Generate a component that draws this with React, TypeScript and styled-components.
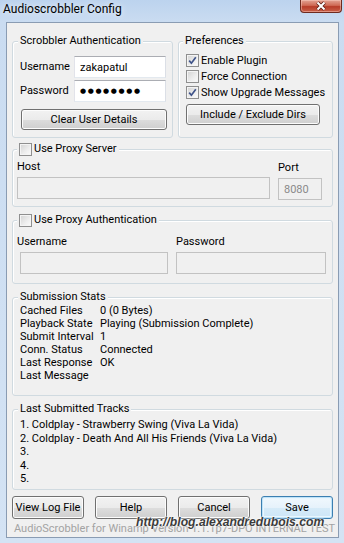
import styled, { createGlobalStyle } from "styled-components";

const GlobalStyle = createGlobalStyle`
   * {
      box-sizing: border-box;
   }
   body {
      margin: 0;
      font-family: Roboto, "Noto Sans", sans-serif;
      font-size: 11px;
      color: #000;
   }
`;

const stats = [
   { label: "Cached Files", value: "0 (0 Bytes)" },
   { label: "Playback State", value: "Playing (Submission Complete)" },
   { label: "Submit Interval", value: "1" },
   { label: "Conn. Status", value: "Connected" },
   { label: "Last Response", value: "OK" },
   { label: "Last Message", value: "" },
];

const tracks = [
   "1. Coldplay - Strawberry Swing (Viva La Vida)",
   "2. Coldplay - Death And All His Friends (Viva La Vida)",
   "3.",
   "4.",
   "5.",
];

function CheckBox({ checked }: { checked?: boolean }) {
   return (
      <CheckBoxStyled>
         {checked && (
            <svg width="11" height="11" viewBox="0 0 11 11">
               <path
                  d="M2.2 5.6 L4.4 8.2 L8.8 2.2"
                  fill="none"
                  stroke="#3f5389"
                  strokeWidth="1.7"
               />
            </svg>
         )}
      </CheckBoxStyled>
   );
}

export default function App() {
   return (
      <>
         <GlobalStyle />
         <Window>
            <TitleBar>
               <Title>Audioscrobbler Config</Title>
               <CloseButton>
                  <svg width="14" height="10" viewBox="0 0 14 10">
                     <path
                        d="M3.5 1.5 L10.5 8.5 M10.5 1.5 L3.5 8.5"
                        stroke="#5a1d15"
                        strokeWidth="3.6"
                     />
                     <path
                        d="M3.5 1.5 L10.5 8.5 M10.5 1.5 L3.5 8.5"
                        stroke="#ffffff"
                        strokeWidth="2"
                     />
                  </svg>
               </CloseButton>
            </TitleBar>

            <Client>
               <TopRow>
                  <Group $pad="14px 5px 7px 7px">
                     <Caption>Scrobbler Authentication</Caption>
                     <LoginGrid>
                        <FieldLabel>Username</FieldLabel>
                        <TextBox>zakapatul</TextBox>
                        <FieldLabel>Password</FieldLabel>
                        <TextBox>
                           <Dots>●●●●●●●●</Dots>
                        </TextBox>
                     </LoginGrid>
                     <PushButton $width={146} $offset={1} $top={7}>
                        Clear User Details
                     </PushButton>
                  </Group>

                  <Group $pad="10px 5px 7px 7px">
                     <Caption $left={4}>Preferences</Caption>
                     <CheckRow>
                        <CheckBox checked />
                        Enable Plugin
                     </CheckRow>
                     <CheckRow>
                        <CheckBox />
                        Force Connection
                     </CheckRow>
                     <CheckRow>
                        <CheckBox checked />
                        Show Upgrade Messages
                     </CheckRow>
                     <PushButton $width={134} $top={4}>
                        Include / Exclude Dirs
                     </PushButton>
                  </Group>
               </TopRow>

               <Group $pad="10px 9px 6px 4px" $top={11}>
                  <Caption $left={4}>
                     <CheckBox />
                     Use Proxy Server
                  </Caption>
                  <FieldGrid $columns="253px 44px">
                     <div>
                        <FieldLabel>Host</FieldLabel>
                        <TextBox $disabled />
                     </div>
                     <PortColumn>
                        <FieldLabel>Port</FieldLabel>
                        <TextBox $disabled>8080</TextBox>
                     </PortColumn>
                  </FieldGrid>
               </Group>

               <Group $pad="14px 5px 9px 4px" $top={13}>
                  <Caption $left={4}>
                     <CheckBox />
                     Use Proxy Authentication
                  </Caption>
                  <FieldGrid $columns="151px 150px">
                     <div>
                        <FieldLabel>Username</FieldLabel>
                        <TextBox $disabled $indent={3} />
                     </div>
                     <div>
                        <FieldLabel>Password</FieldLabel>
                        <TextBox $disabled />
                     </div>
                  </FieldGrid>
               </Group>

               <Group $pad="6px 5px 13px 7px" $top={13}>
                  <Caption>Submission Stats</Caption>
                  <StatsGrid>
                     {stats.map((stat) => (
                        <StatRow key={stat.label}>
                           <span>{stat.label}</span>
                           <span>{stat.value}</span>
                        </StatRow>
                     ))}
                  </StatsGrid>
               </Group>

               <Group $pad="8px 5px 3.5px 7px" $top={13}>
                  <Caption>Last Submitted Tracks</Caption>
                  {tracks.map((track) => (
                     <TrackRow key={track}>{track}</TrackRow>
                  ))}
               </Group>

               <ButtonBar>
                  <PushButton>View Log File</PushButton>
                  <PushButton>Help</PushButton>
                  <PushButton>Cancel</PushButton>
                  <PushButton $primary>Save</PushButton>
               </ButtonBar>

               <Footer>
                  AudioScrobbler for Winamp Version 1.1.1p7-DPO INTERNAL TEST
               </Footer>
            </Client>

            <Watermark>http://blog.alexandredubois.com</Watermark>
         </Window>
      </>
   );
}

const Window = styled.div`
   position: relative;
   width: 344px;
   height: 543px;
   display: flex;
   flex-direction: column;
   overflow: hidden;
   background: linear-gradient(180deg, #bcd3ee 0px, #cadcf1 22px, #d4e3f4 100%);
`;

const TitleBar = styled.div`
   height: 22px;
   flex: none;
   display: flex;
   justify-content: space-between;
   align-items: flex-start;
   padding-left: 3px;
`;

const Title = styled.span`
   font-size: 12px;
   line-height: 18px;
   color: #000;
   text-shadow: 0 0 6px rgba(255, 255, 255, 0.9);
`;

const CloseButton = styled.div`
   width: 42px;
   height: 13px;
   margin-right: 2px;
   display: flex;
   align-items: center;
   justify-content: center;
   border: 1px solid #6e2a1f;
   border-top: none;
   border-radius: 0 0 4px 4px;
   background: linear-gradient(180deg, #e3a393 0%, #cf6a55 45%, #b73c28 55%, #c9614a 100%);
   box-shadow: inset 0 0 0 1px rgba(255, 210, 200, 0.45);
`;

const Client = styled.div`
   flex: 1;
   margin: 0 5px 5px 6px;
   padding: 18px 5px 0 5px;
   display: flex;
   flex-direction: column;
   background: #f0f0f0;
   border: 1px solid #8a9cb3;
`;

const TopRow = styled.div`
   display: grid;
   grid-template-columns: 161px 155px;
   gap: 5px;
`;

const Group = styled.div<{ $pad: string; $top?: number }>`
   position: relative;
   margin-top: ${({ $top }) => $top ?? 0}px;
   padding: ${({ $pad }) => $pad};
   border: 1px solid #d0dae0;
   border-radius: 3px;
   box-shadow: inset 1px 1px 0 #ffffff;
`;

const Caption = styled.div<{ $left?: number }>`
   position: absolute;
   top: -8px;
   left: ${({ $left }) => $left ?? 5}px;
   height: 14px;
   padding: 0 2px;
   display: flex;
   align-items: center;
   gap: 2px;
   line-height: 14px;
   background: #f0f0f0;
   white-space: nowrap;
`;

const LoginGrid = styled.div`
   display: grid;
   grid-template-columns: 54px 92px;
   grid-auto-rows: 22px;
   row-gap: 2px;
   align-items: center;
`;

const FieldLabel = styled.div`
   line-height: 14px;
   white-space: nowrap;
`;

const TextBox = styled.div<{ $disabled?: boolean; $indent?: number }>`
   height: 22px;
   margin-left: ${({ $indent }) => $indent ?? 0}px;
   padding: 0 5px;
   display: flex;
   align-items: center;
   background: ${({ $disabled }) => ($disabled ? "#f0f0f0" : "#ffffff")};
   border: 1px solid;
   border-color: ${({ $disabled }) =>
      $disabled ? "#c2c2c2" : "#abadb3 #dbdfe6 #e3e9ef #e2e3ea"};
   color: ${({ $disabled }) => ($disabled ? "#8a8a8a" : "#000")};
   white-space: nowrap;
`;

const Dots = styled.span`
   font-family: "DejaVu Sans", sans-serif;
   font-size: 7px;
   letter-spacing: 1.6px;
`;

const FieldGrid = styled.div<{ $columns: string }>`
   display: grid;
   grid-template-columns: ${({ $columns }) => $columns};
   column-gap: 8px;

   ${FieldLabel} {
      margin-bottom: 3px;
   }
`;

const PortColumn = styled.div`
   padding-top: 1px;
`;

const CheckRow = styled.div`
   height: 16px;
   display: flex;
   align-items: center;
   gap: 2px;
   white-space: nowrap;
`;

const CheckBoxStyled = styled.span`
   width: 13px;
   height: 13px;
   flex: none;
   display: inline-flex;
   align-items: center;
   justify-content: center;
   border: 1px solid #8f8f8f;
   background: linear-gradient(135deg, #d2d2d2 0%, #eeeeee 60%, #fbfbfb 100%);
   box-shadow: inset 0 0 0 1px #f4f4f4;
`;

const PushButton = styled.div<{
   $width?: number;
   $offset?: number;
   $top?: number;
   $primary?: boolean;
}>`
   width: ${({ $width }) => ($width ? `${$width}px` : "auto")};
   height: ${({ $width }) => ($width ? 21 : 23)}px;
   margin-left: ${({ $offset }) => $offset ?? 0}px;
   margin-top: ${({ $top }) => $top ?? 0}px;
   display: flex;
   align-items: center;
   justify-content: center;
   white-space: nowrap;
   border: 1px solid ${({ $primary }) => ($primary ? "#3c7fb1" : "#707070")};
   border-radius: 3px;
   background: ${({ $primary }) =>
      $primary
         ? "linear-gradient(180deg, #f1f8fd 0%, #e6f2fb 50%, #d6ebf8 51%, #cde6f7 100%)"
         : "linear-gradient(180deg, #f2f2f2 0%, #ebebeb 50%, #dddddd 51%, #cfcfcf 100%)"};
   box-shadow: ${({ $primary }) =>
      $primary
         ? "inset 0 0 0 1px #bfe3f8, inset 0 0 0 2px #eaf6fd"
         : "inset 0 0 0 1px #fcfcfc"};
`;

const StatsGrid = styled.div`
   display: flex;
   flex-direction: column;
`;

const StatRow = styled.div`
   display: grid;
   grid-template-columns: 80px 1fr;
   height: 13px;
   line-height: 13px;
   white-space: nowrap;
`;

const TrackRow = styled.div`
   height: 13.5px;
   line-height: 13.5px;
   white-space: nowrap;
`;

const ButtonBar = styled.div`
   margin-top: 6px;
   display: grid;
   grid-template-columns: repeat(4, 72px);
   justify-content: space-between;
`;

const Footer = styled.div`
   flex: 1;
   display: flex;
   align-items: center;
   padding-left: 2px;
   padding-top: 1px;
   color: #a3a3a3;
   white-space: nowrap;
`;

const Watermark = styled.div`
   position: absolute;
   left: 136px;
   top: 515px;
   font-family: "Liberation Sans", Arial, sans-serif;
   font-size: 12.2px;
   font-weight: bold;
   font-style: italic;
   color: #3b3b3b;
   text-shadow: 0 0 2px #ffffff, 0 0 2px #ffffff;
   white-space: nowrap;
`;
